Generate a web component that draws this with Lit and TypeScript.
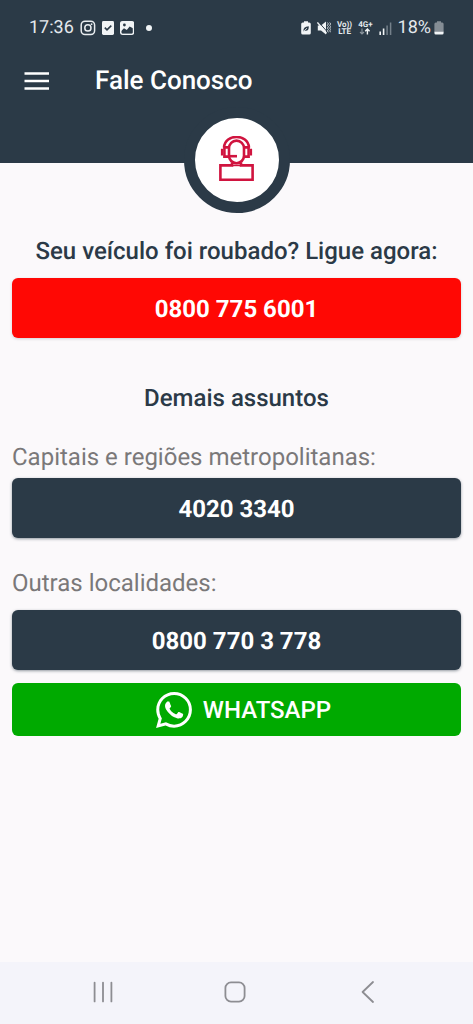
import { LitElement, html, css, svg } from "lit";
import { customElement } from "lit/decorators.js";

const menuIcon = svg`
  <svg viewBox="0 0 26 18" width="26" height="18" aria-hidden="true">
    <path d="M0.5 1.5H25M0.5 9H25M0.5 16.5H25" stroke="#fff" stroke-width="2.4" fill="none" />
  </svg>`;

const instagramIcon = svg`
  <svg viewBox="0 0 16 16" width="16" height="16" aria-hidden="true" fill="none" stroke="#e9edf0" stroke-width="1.5">
    <rect x="1.2" y="1.2" width="13.4" height="13.4" rx="3.8" />
    <circle cx="7.9" cy="7.9" r="3.1" />
    <circle cx="11.6" cy="4.2" r="0.9" fill="#e9edf0" stroke="none" />
  </svg>`;

const checkIcon = svg`
  <svg viewBox="0 0 12 16" width="12" height="16" aria-hidden="true">
    <rect x="0" y="1" width="12" height="14" rx="1.4" fill="#f1f4f6" />
    <path d="M2.8 7.6L5 9.8L9.3 5.6" fill="none" stroke="#2b3a47" stroke-width="1.6" />
  </svg>`;

const pictureIcon = svg`
  <svg viewBox="0 0 14 16" width="14" height="16" aria-hidden="true">
    <rect x="0.7" y="1.7" width="12.8" height="12.6" rx="2" fill="none" stroke="#f1f4f6" stroke-width="1.5" />
    <path d="M0.7 1.7H13.5V8.5L9.6 6.6L6.8 10L4 8.2L0.7 11.5Z" fill="#f1f4f6" />
    <path d="M2 13.2V11.4L4.2 9.2L7 11L9.8 7.6L12.2 9.6V13.2Z" fill="#2b3a47" />
    <circle cx="4.4" cy="5" r="1.4" fill="#2b3a47" />
  </svg>`;

const saverIcon = svg`
  <svg viewBox="0 0 10 14" width="10" height="14" aria-hidden="true">
    <path d="M3 0.3H7V1.5H8.2Q9.8 1.5 9.8 3V12Q9.8 13.6 8.2 13.6H1.8Q0.2 13.6 0.2 12V3Q0.2 1.5 1.8 1.5H3Z" fill="#f1f4f6" />
    <path d="M2.6 10.4Q1.6 5.6 7.8 5.2Q8 10.4 3.8 9.6" fill="#2b3a47" />
    <path d="M2.8 10L6 7.2" stroke="#f1f4f6" stroke-width="0.8" />
  </svg>`;

const muteIcon = svg`
  <svg viewBox="0 0 14 14" width="14" height="14" aria-hidden="true">
    <path d="M0.8 4.4H4L9 0.6V13.4L4 9.6H0.8Z" fill="#f1f4f6" />
    <path d="M1.4 0.8L10.6 11.2" stroke="#2b3a47" stroke-width="1" />
    <path d="M0.4 1.4L9.6 12.4" stroke="#f1f4f6" stroke-width="1.4" />
    <path d="M10.4 1.5l1 1.4l-1 1.4l1 1.4l-1 1.4l1 1.4l-1 1.4l1 1.4M12.7 1.5l1 1.4l-1 1.4l1 1.4l-1 1.4l1 1.4l-1 1.4l1 1.4" fill="none" stroke="#dfe4e8" stroke-width="0.9" />
  </svg>`;

const arrowsIcon = svg`
  <svg viewBox="0 0 12 7" width="12" height="7" aria-hidden="true" fill="none">
    <path d="M3 0.5V6M1 4L3 6L5 4" stroke="#8c969e" stroke-width="1.1" />
    <path d="M8.4 6.6V1M6.2 3.2L8.4 1L10.6 3.2" stroke="#f1f4f6" stroke-width="1.4" />
  </svg>`;

const signalIcon = svg`
  <svg viewBox="0 0 13 13" width="13" height="13" aria-hidden="true">
    <path d="M1.2 9.5V13M4.6 6.5V13" stroke="#f1f4f6" stroke-width="1.6" />
    <path d="M8.1 3.5V13M11.6 0.5V13" stroke="#75818b" stroke-width="1.5" />
  </svg>`;

const batteryIcon = svg`
  <svg viewBox="0 0 10 14" width="10" height="14" aria-hidden="true">
    <path d="M3 0.3H7V1.5H8.2Q9.6 1.5 9.6 3V11H0.4V3Q0.4 1.5 1.8 1.5H3Z" fill="#858d95" />
    <path d="M0.4 10.8H9.6V12Q9.6 13.5 8.2 13.5H1.8Q0.4 13.5 0.4 12Z" fill="#f1f4f6" />
  </svg>`;

const agentIcon = svg`
  <svg viewBox="0 0 36 48" width="36" height="48" aria-hidden="true" fill="none" stroke="#d0143f" stroke-width="2.6">
    <path d="M5 11.5C6 -2.6 29 -2.6 30 11.5" />
    <rect x="10" y="4.6" width="15" height="22.6" rx="7.5" />
    <path d="M10 11.4H5.4V20.6H10.4M25 11.4H29.6V20.6H24.6" />
    <path d="M3 12.8V19.4M32 12.8V19.4" stroke-width="2.2" />
    <path d="M9 20.2H18" />
    <path d="M13 26.4V29.4H1.4V43.8H33.6V29.4H22V26.4" />
    <path d="M13 29.4H22" stroke-width="1.6" />
  </svg>`;

const whatsappIcon = svg`
  <svg viewBox="0 0 24 24" width="36" height="36" aria-hidden="true" fill="#fff">
    <path d="M17.472 14.382c-.297-.149-1.758-.867-2.03-.967-.273-.099-.471-.148-.67.15-.197.297-.767.966-.94 1.164-.173.199-.347.223-.644.075-.297-.15-1.255-.463-2.39-1.475-.883-.788-1.48-1.761-1.653-2.059-.173-.297-.018-.458.13-.606.134-.133.298-.347.446-.52.149-.174.198-.298.298-.497.099-.198.05-.371-.025-.52-.075-.149-.669-1.612-.916-2.207-.242-.579-.487-.5-.669-.51-.173-.008-.371-.01-.57-.01-.198 0-.52.074-.792.372-.272.297-1.04 1.016-1.04 2.479 0 1.462 1.065 2.875 1.213 3.074.149.198 2.096 3.2 5.077 4.487.709.306 1.262.489 1.694.625.712.227 1.36.195 1.871.118.571-.085 1.758-.719 2.006-1.413.248-.694.248-1.289.173-1.413-.074-.124-.272-.198-.57-.347m-5.421 7.403h-.004a9.87 9.87 0 01-5.031-1.378l-.361-.214-3.741.982.998-3.648-.235-.374a9.86 9.86 0 01-1.51-5.26c.001-5.45 4.436-9.884 9.888-9.884 2.64 0 5.122 1.03 6.988 2.898a9.825 9.825 0 012.893 6.994c-.003 5.45-4.437 9.884-9.885 9.884m8.413-18.297A11.815 11.815 0 0012.05 0C5.495 0 .16 5.335.157 11.892c0 2.096.547 4.142 1.588 5.945L.057 24l6.305-1.654a11.882 11.882 0 005.683 1.448h.005c6.554 0 11.89-5.335 11.893-11.893a11.821 11.821 0 00-3.48-8.413z" />
  </svg>`;

const recentsIcon = svg`
  <svg viewBox="0 0 22 22" width="22" height="22" aria-hidden="true" fill="none" stroke="#8d8d92" stroke-width="1.8" stroke-linecap="round">
    <path d="M2.6 1.6V20.4M11 1.6V20.4M19.4 1.6V20.4" />
  </svg>`;

const homeIcon = svg`
  <svg viewBox="0 0 22 22" width="22" height="22" aria-hidden="true" fill="none" stroke="#8d8d92" stroke-width="1.8">
    <rect x="1.4" y="1.4" width="19.2" height="19.2" rx="5.6" />
  </svg>`;

const backIcon = svg`
  <svg viewBox="0 0 22 22" width="22" height="22" aria-hidden="true" fill="none" stroke="#8d8d92" stroke-width="1.8" stroke-linecap="round" stroke-linejoin="round">
    <path d="M17 1L6.6 11L17 21" />
  </svg>`;

@customElement("app-root")
export class AppRoot extends LitElement {
  static styles = css`
    :host {
      display: flex;
      flex-direction: column;
      min-height: 100vh;
      background: #fbf9fb;
      color: #2b3a47;
      font-family: Roboto, "Liberation Sans", sans-serif;
      text-rendering: geometricPrecision;
    }
    svg {
      display: block;
      flex: none;
    }
    button {
      border: 0;
      padding: 0;
      background: none;
      font: inherit;
      color: inherit;
      text-rendering: inherit;
      cursor: pointer;
    }
    .header {
      background: #2b3a47;
      color: #fff;
      display: flex;
      flex-direction: column;
    }
    .status {
      height: 56px;
      padding: 0 29px;
      display: flex;
      align-items: center;
      justify-content: space-between;
      font-size: 18px;
      line-height: 20px;
      color: #e4e9ed;
    }
    .group {
      display: flex;
      align-items: center;
    }
    .left {
      gap: 6px;
    }
    .right {
      gap: 6px;
    }
    .level {
      display: flex;
      align-items: center;
      gap: 3px;
    }
    .dot {
      width: 6px;
      height: 6px;
      margin-left: 6px;
      border-radius: 50%;
      background: #f1f4f6;
    }
    .net {
      display: flex;
      flex-direction: column;
      align-items: center;
      font-size: 8px;
      line-height: 7px;
      font-weight: 700;
    }
    .toolbar {
      height: 50px;
      padding: 0 24px;
      display: flex;
      align-items: center;
      gap: 45px;
    }
    .title {
      margin: 0;
      font-size: 26px;
      line-height: 32px;
      font-weight: 500;
    }
    .badge {
      align-self: center;
      box-sizing: border-box;
      width: 106px;
      height: 106px;
      margin-top: 1px;
      margin-bottom: -50px;
      border: 11px solid #2b3a47;
      border-radius: 50%;
      background: #fff;
      display: grid;
      place-items: center;
    }
    .main {
      flex: 1;
      padding: 74px 12px 24px;
      display: flex;
      flex-direction: column;
    }
    .heading {
      margin: 0 0 13px;
      text-align: center;
      font-size: 24px;
      line-height: 28px;
      font-weight: 500;
    }
    .section {
      margin-top: 46px;
      margin-bottom: 31px;
    }
    .label {
      margin: 0 0 7px;
      font-size: 24px;
      line-height: 28px;
      color: #7a7879;
    }
    .label.spaced {
      margin: 31px 0 13px;
    }
    .call {
      box-sizing: border-box;
      height: 60px;
      padding-top: 2px;
      border-radius: 6px;
      background: #2b3a47;
      color: #fff;
      font-size: 24px;
      line-height: 28px;
      font-weight: 700;
      box-shadow: 0 1px 3px rgba(43, 58, 71, 0.5);
      display: flex;
      align-items: center;
      justify-content: center;
      gap: 11px;
    }
    .call.urgent {
      background: #ff0804;
      box-shadow: 0 1px 3px rgba(43, 58, 71, 0.2);
    }
    .call.whatsapp {
      height: 53px;
      margin-top: 13px;
      padding-top: 1px;
      padding-left: 14px;
      background: #00aa00;
      box-shadow: none;
      font-weight: 500;
    }
    .nav {
      height: 60px;
      padding: 0 3px 2px 0;
      background: #f4f4fa;
      display: flex;
      justify-content: center;
      align-items: center;
      gap: 110px;
    }
  `;

  render() {
    return html`
      <header class="header">
        <div class="status">
          <div class="group left">
            <span>17:36</span>
            ${instagramIcon}${checkIcon}${pictureIcon}
            <span class="dot"></span>
          </div>
          <div class="group right">
            ${saverIcon}${muteIcon}
            <div class="net"><span>Vo))</span><span>LTE</span></div>
            <div class="net"><span>4G+</span>${arrowsIcon}</div>
            ${signalIcon}
            <div class="level"><span>18%</span>${batteryIcon}</div>
          </div>
        </div>
        <div class="toolbar">
          <button type="button" aria-label="Menu">${menuIcon}</button>
          <h1 class="title">Fale Conosco</h1>
        </div>
        <div class="badge">${agentIcon}</div>
      </header>
      <main class="main">
        <h2 class="heading">Seu veículo foi roubado? Ligue agora:</h2>
        <button class="call urgent" type="button">0800 775 6001</button>
        <h2 class="heading section">Demais assuntos</h2>
        <p class="label">Capitais e regiões metropolitanas:</p>
        <button class="call" type="button">4020 3340</button>
        <p class="label spaced">Outras localidades:</p>
        <button class="call" type="button">0800 770 3 778</button>
        <button class="call whatsapp" type="button">${whatsappIcon}<span>WHATSAPP</span></button>
      </main>
      <nav class="nav">
        <button type="button" aria-label="Recentes">${recentsIcon}</button>
        <button type="button" aria-label="Início">${homeIcon}</button>
        <button type="button" aria-label="Voltar">${backIcon}</button>
      </nav>
    `;
  }
}
